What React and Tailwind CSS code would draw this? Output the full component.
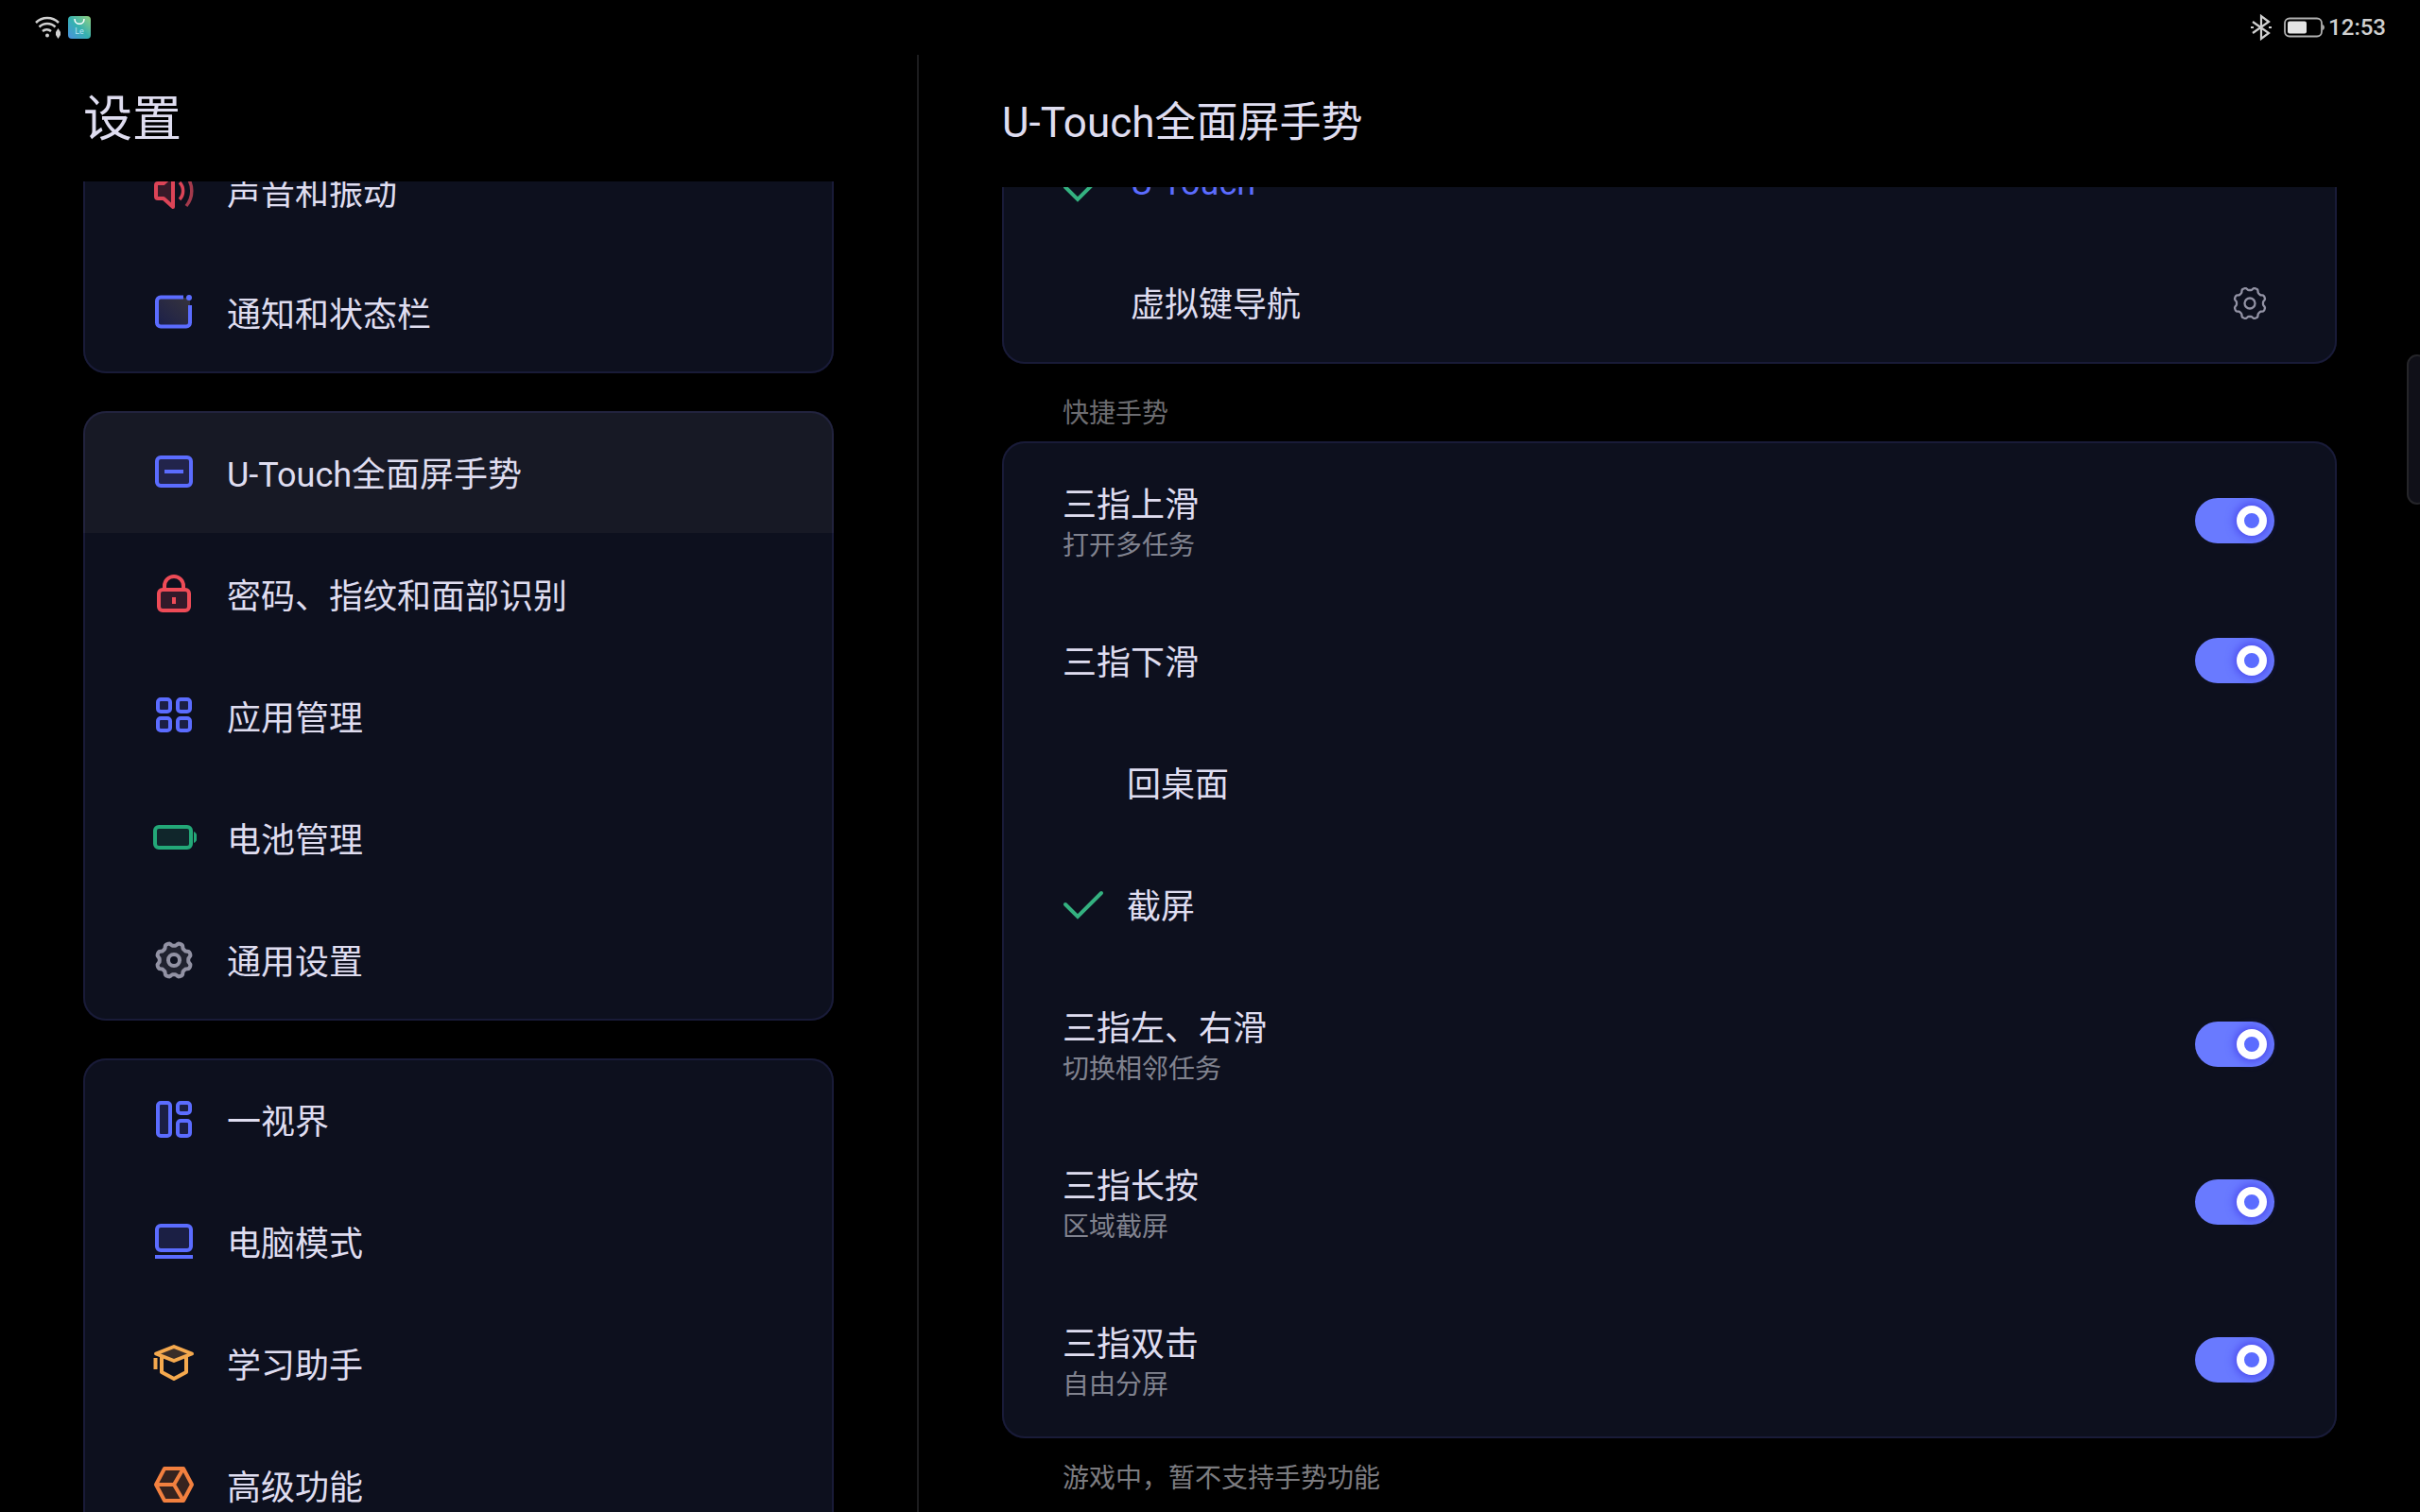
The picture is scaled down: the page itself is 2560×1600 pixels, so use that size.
const soundIcon = (
  <svg viewBox="0 0 48 48" className="size-12" fill="none" stroke="#dc4457" strokeWidth="4" strokeLinejoin="round">
    <path d="M7 16h6l10-9v34l-10-9H7a2 2 0 0 1-2-2V18a2 2 0 0 1 2-2Z" fill="#371a29" />
    <path d="M30 15a13 13 0 0 1 0 18" strokeWidth="3.500" />
    <path d="M37 8a25 25 0 0 1 0 32" strokeWidth="3.500" stroke="#a33a4c" />
  </svg>
);

const noticeIcon = (
  <svg viewBox="0 0 48 48" className="size-12" fill="none" stroke="#5b6cff" strokeWidth="4">
    <defs>
      <linearGradient id="notice" x1="0" x2="1" y1="1" y2="0">
        <stop offset="0" stopColor="#1b1f4a" />
        <stop offset="1" stopColor="#37343c" />
      </linearGradient>
    </defs>
    <rect x="7" y="8" width="34" height="30" fill="url(#notice)" stroke="none" />
    <path d="M34 7.500H10a4 4 0 0 0-4 4v23a4 4 0 0 0 4 4h27a4 4 0 0 0 4-4V16" />
    <circle cx="40" cy="8" r="3" fill="#5b6cff" stroke="none" />
  </svg>
);

const touchIcon = (
  <svg viewBox="0 0 48 48" className="size-12" fill="none" stroke="#5b6cff" strokeWidth="4">
    <rect x="6" y="8" width="36" height="30" rx="4" fill="#22244b" />
    <path d="M14 23h20" />
  </svg>
);

const lockIcon = (
  <svg viewBox="0 0 48 48" className="size-12" fill="none" stroke="#ee4b57" strokeWidth="4">
    <rect x="8" y="19" width="32" height="22" rx="4" fill="#331a2a" />
    <path d="M14 17v-2a10 10 0 0 1 20 0v2M24 27v7" />
  </svg>
);

const appsIcon = (
  <svg viewBox="0 0 48 48" className="size-12" fill="#1b1f44" stroke="#5b6cff" strokeWidth="4">
    <rect x="7" y="6" width="13" height="13" rx="3" />
    <rect x="28" y="6" width="13" height="13" rx="3" />
    <rect x="7" y="26" width="13" height="13" rx="3" />
    <rect x="28" y="26" width="13" height="13" rx="3" />
  </svg>
);

const batteryIcon = (
  <svg viewBox="0 0 48 48" className="size-12" fill="none" stroke="#23a878" strokeWidth="4">
    <rect x="4" y="12" width="38" height="22" rx="4" fill="#10262b" />
    <path d="M45 17c5 2 5 10 0 12Z" fill="#23a878" stroke="none" />
  </svg>
);

function Gear({ className, strokeWidth, fill }) {
  // eight rounded teeth, sampled round the centre
  const points = [];
  for (let i = 0; i < 96; i++) {
    const a = (i / 96) * Math.PI * 2;
    const r = 16.8 + 1.6 * Math.tanh(-2 * Math.cos(8 * a));
    points.push(`${(24 + r * Math.cos(a)).toFixed(2)} ${(24 + r * Math.sin(a)).toFixed(2)}`);
  }
  return (
    <svg viewBox="0 0 48 48" className={className} stroke="#9292a4" strokeWidth={strokeWidth} strokeLinejoin="round">
      <path d={`M${points.join("L")}Z`} fill={fill} />
      <circle cx="24" cy="24" r="6" fill="#0d101e" />
    </svg>
  );
}

const viewIcon = (
  <svg viewBox="0 0 48 48" className="size-12" fill="#1b1f44" stroke="#5b6cff" strokeWidth="4">
    <rect x="7" y="6" width="13" height="35" rx="3" />
    <rect x="28" y="6" width="13" height="11" rx="3" />
    <rect x="28" y="25" width="13" height="16" rx="3" />
  </svg>
);

const pcIcon = (
  <svg viewBox="0 0 48 48" className="size-12" fill="#1b1f44" stroke="#5b6cff" strokeWidth="4">
    <rect x="6" y="7" width="36" height="26" rx="4" />
    <path d="M4 40h40" />
  </svg>
);

const studyIcon = (
  <svg viewBox="0 0 48 48" className="size-12" fill="none" stroke="#f5a94e" strokeWidth="4" strokeLinejoin="round">
    <path d="M11 17v16l13 7 13-7V17" />
    <path d="M24 6 43 13.500 24 21 5 13.500Z" fill="#3a2d28" />
    <path d="M4.500 18v12" />
  </svg>
);

const advancedIcon = (
  <svg viewBox="0 0 48 48" className="size-12" fill="none" stroke="#f2803f" strokeWidth="4" strokeLinejoin="round">
    <path d="M14 6h20l9 17-9 17H14L5 23Z" fill="#35231f" />
    <path d="M5 23h19L34 6M24 23l10 17" />
  </svg>
);

const menuGroups = [
  [
    { title: "声音和振动", icon: soundIcon },
    { title: "通知和状态栏", icon: noticeIcon },
  ],
  [
    { title: "U-Touch全面屏手势", icon: touchIcon, active: true },
    { title: "密码、指纹和面部识别", icon: lockIcon },
    { title: "应用管理", icon: appsIcon },
    { title: "电池管理", icon: batteryIcon },
    { title: "通用设置", icon: <Gear className="size-12" strokeWidth="4" fill="#20222f" /> },
  ],
  [
    { title: "一视界", icon: viewIcon },
    { title: "电脑模式", icon: pcIcon },
    { title: "学习助手", icon: studyIcon },
    { title: "高级功能", icon: advancedIcon },
  ],
];

function StatusBar() {
  return (
    <header className="flex h-[58px] shrink-0 items-center justify-between px-9 text-[#d0d0d0]">
      <div className="flex items-center gap-2">
        <svg viewBox="0 0 28 24" className="h-6 w-7" fill="none" stroke="#d0d0d0" strokeWidth="2.500">
          <path d="M2 7a17 17 0 0 1 24 0M5.500 11.500a12 12 0 0 1 17 0M9 16a7 7 0 0 1 9 0" />
          <circle cx="14" cy="20.500" r="2" fill="#d0d0d0" stroke="none" />
          <path d="m25.500 13 2.500 4v3l-2.500 4-2.500-4v-3Z" fill="#d0d0d0" stroke="none" />
        </svg>
        <span className="flex h-6 w-6 flex-col items-center rounded-sm bg-linear-to-bl from-[#8fd07a] via-[#35b2ae] to-[#4a8fe0] text-[9px] leading-none text-[#b5e4f5]">
          <svg viewBox="0 0 24 12" className="h-3 w-6" fill="none" stroke="#fff" strokeWidth="1.500">
            <path d="M7 3c0 7 10 7 10 0" />
          </svg>
          Le
        </span>
      </div>
      <div className="flex items-center">
        <svg viewBox="0 0 22 28" className="mr-3 h-7 w-[22px]" fill="none" stroke="#d0d0d0" strokeWidth="2.200">
          <path d="m2 8 17 12-8 6V2l8 6L2 20" />
          <path d="M0 14h3M19 14h3" />
        </svg>
        <svg viewBox="0 0 44 22" className="mr-1 h-[22px] w-11" fill="none">
          <rect x="2" y="1.500" width="39" height="19" rx="5" stroke="#b0b0b0" strokeWidth="1.800" />
          <rect x="5" y="4.500" width="20" height="13" rx="2" fill="#e4e4e4" />
          <path d="M42 8c2.500 1 2.500 5 0 6Z" fill="#b0b0b0" />
        </svg>
        <time className="text-2xl font-medium">12:53</time>
      </div>
    </header>
  );
}

function MenuGroup({ items }) {
  return (
    <ul className="overflow-hidden rounded-3xl bg-[#0d101e] ring-2 ring-inset ring-[#191b38]">
      {items.map((item) => (
        <li key={item.title}>
          <a
            href="#"
            aria-current={item.active ? "page" : undefined}
            className={`flex h-[129px] items-center gap-8 pl-18 ${item.active ? "bg-[#d8c0a8]/5" : ""}`}
          >
            {item.icon}
            <span className="pt-1.5">{item.title}</span>
          </a>
        </li>
      ))}
    </ul>
  );
}

function Check({ className }) {
  return (
    <svg viewBox="0 0 44 32" className={className} fill="none" stroke="#34b180" strokeWidth="4" strokeLinecap="round">
      <path d="m3 16 13 13L41 4" />
    </svg>
  );
}

// wide rows belong to the navigation list, compact ones hang under a toggle
function Option({ title, name, checked, wide, children }) {
  return (
    <div className="flex h-[129px] items-center justify-between">
      <label className={`flex items-center ${wide ? "gap-7" : "gap-6"}`}>
        <input type="radio" name={name} defaultChecked={checked} className="peer sr-only" />
        <Check className={`invisible w-11 peer-checked:visible ${wide ? "mt-3 h-8" : "h-8"}`} />
        <span className={wide ? "pt-1 peer-checked:text-[#5b6cff]" : "pt-1.5"}>{title}</span>
      </label>
      {children}
    </div>
  );
}

function Toggle({ title, hint }) {
  return (
    <label className={`flex items-center justify-between ${hint ? "h-[167px]" : "h-[129px]"}`}>
      <span className="flex flex-col pt-1.5">
        {title}
        {hint && <span className="text-[28px] leading-[38px] text-[#81838f]">{hint}</span>}
      </span>
      <input type="checkbox" role="switch" defaultChecked className="peer sr-only" />
      <span className="flex h-12 w-[84px] items-center rounded-full bg-[#3a3c4c] px-2 peer-checked:justify-end peer-checked:bg-[#697aff]">
        <span className="size-8 rounded-full border-8 border-white bg-[#5b6cff] shadow-[0_0_10px_2px_#4a48ee]" />
      </span>
    </label>
  );
}

function App() {
  return (
    <div className="relative flex h-screen flex-col overflow-hidden bg-black font-['Roboto','Noto_Sans_CJK_SC',sans-serif] text-4xl leading-[48px] text-[#dfddf0]">
      <StatusBar />
      <div className="grid min-h-0 flex-1 grid-cols-[243fr_397fr] grid-rows-[minmax(0,1fr)]">
        <aside className="flex flex-col border-r-2 border-[#1c1c1e] px-[88px]">
          <h1 className="flex h-[134px] shrink-0 items-center pt-1 text-[52px] leading-[60px]">设置</h1>
          <nav className="min-h-0 flex-1 overflow-hidden">
            <div className="-mt-[55px] flex flex-col gap-10">
              {menuGroups.map((items) => (
                <MenuGroup key={items[0].title} items={items} />
              ))}
            </div>
          </nav>
        </aside>

        <main className="flex flex-col px-[88px]">
          <h2 className="flex h-[140px] shrink-0 items-center pt-1 text-[44px] leading-[52px]">U-Touch全面屏手势</h2>
          <div className="min-h-0 flex-1 overflow-hidden">
            <section className="-mt-[71px] rounded-3xl bg-[#0d101e] pl-16 pr-[66px] ring-2 ring-inset ring-[#191b38]">
              <Option name="navigation" title="U-Touch" checked wide />
              <Option name="navigation" title="虚拟键导航" wide>
                <button type="button" aria-label="虚拟键导航设置" className="pr-1">
                  <Gear className="size-11" strokeWidth="2.500" fill="none" />
                </button>
              </Option>
            </section>

            <h3 className="flex h-[82px] items-center pl-16 pt-6 text-[28px] leading-[38px] text-[#6c6c70]">快捷手势</h3>
            <section className="rounded-3xl bg-[#0d101e] pl-16 pr-[66px] ring-2 ring-inset ring-[#191b38]">
              <Toggle title="三指上滑" hint="打开多任务" />
              <Toggle title="三指下滑" />
              <Option name="swipe-down" title="回桌面" />
              <Option name="swipe-down" title="截屏" checked />
              <Toggle title="三指左、右滑" hint="切换相邻任务" />
              <Toggle title="三指长按" hint="区域截屏" />
              <Toggle title="三指双击" hint="自由分屏" />
            </section>
            <p className="pl-16 pt-6 text-[28px] leading-[38px] text-[#7c7c80]">游戏中，暂不支持手势功能</p>
          </div>
        </main>
      </div>

      {/* edge handle of the floating sidebar */}
      <div className="absolute -right-2 top-[375px] h-[159px] w-[22px] rounded-xl border-2 border-[#252529] bg-[#101018]" />
    </div>
  );
}

export default App;
